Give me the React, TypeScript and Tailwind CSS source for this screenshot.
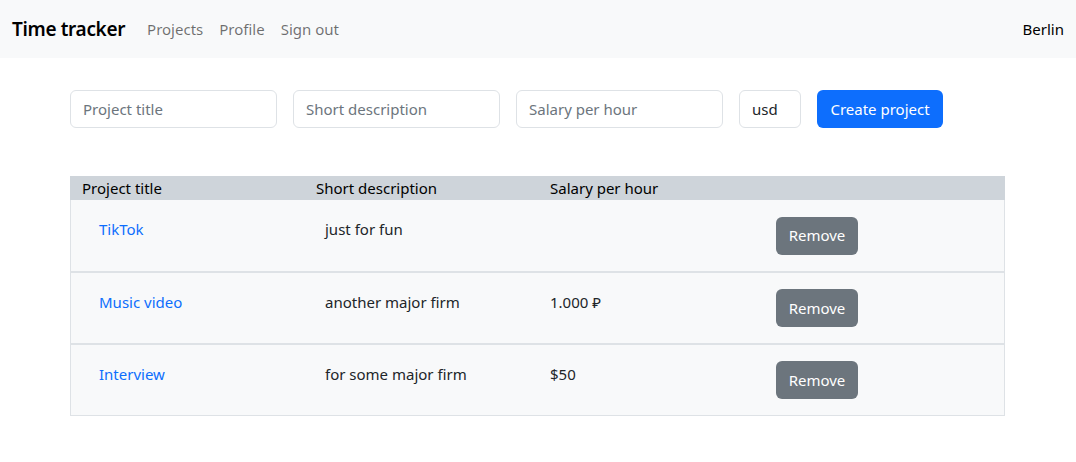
import React from "react";

const projects = [
  { title: "TikTok", desc: "just for fun", salary: "" },
  { title: "Music video", desc: "another major firm", salary: "1.000 ₽" },
  { title: "Interview", desc: "for some major firm", salary: "$50" },
];

export default function App() {
  return (
    <div
      className="min-h-[462px] bg-white text-[#212529]"
      style={{ fontFamily: '"Noto Sans", "Open Sans", sans-serif' }}
    >
      <nav className="h-[58px] bg-[#f8f9fa] flex items-center px-3">
        <span className="text-[19px] font-semibold text-black mr-[22px] tracking-[-0.35px]">Time tracker</span>
        <div className="flex gap-[16px] text-[15px] text-[#00000090]">
          <a>Projects</a>
          <a>Profile</a>
          <a>Sign out</a>
        </div>
        <span className="ml-auto text-[15px] text-black">Berlin</span>
      </nav>

      <div className="pl-[70px] pr-[71px]">
        <form className="flex gap-4 mt-[32px]">
          <input
            placeholder="Project title"
            className="w-[207px] h-[38px] border border-[#dee2e6] rounded-[6px] px-3 text-[15px] placeholder:text-[#6c757d] outline-none"
          />
          <input
            placeholder="Short description"
            className="w-[207px] h-[38px] border border-[#dee2e6] rounded-[6px] px-3 text-[15px] placeholder:text-[#6c757d] outline-none"
          />
          <input
            placeholder="Salary per hour"
            className="w-[207px] h-[38px] border border-[#dee2e6] rounded-[6px] px-3 text-[15px] placeholder:text-[#6c757d] outline-none"
          />
          <div className="w-[62px] h-[38px] border border-[#dee2e6] rounded-[6px] px-3 flex items-center text-[15px]">
            usd
          </div>
          <button className="w-[126px] h-[38px] bg-[#0d6efd] text-white rounded-[6px] text-[15px]">
            Create project
          </button>
        </form>

        <div className="mt-[48px] w-[935px]">
          <div className="grid grid-cols-[234px_234px_234px_1fr] h-[24px] items-center bg-[#ced4da] px-3 text-[15px] text-black">
            <span>Project title</span>
            <span>Short description</span>
            <span>Salary per hour</span>
            <span />
          </div>
          <div className="border border-t-0 border-[#dee2e6]">
            {projects.map((p, i) => (
              <div
                key={p.title}
                className={`grid grid-cols-[254px_225px_226px_1fr] bg-[#f8f9fa] text-[15px] ${
                  i > 0 ? "h-[72px] border-t-2 border-[#dee2e6]" : "h-[71px]"
                }`}
              >
                <a className="pl-[28px] pt-[18px] text-[#0d6efd]">{p.title}</a>
                <span className="pt-[18px]">{p.desc}</span>
                <span className="pt-[18px]">{p.salary}</span>
                <div className="flex items-center">
                  <button className="w-[82px] h-[38px] bg-[#6c757d] text-white rounded-[6px] text-[15px]">
                    Remove
                  </button>
                </div>
              </div>
            ))}
          </div>
        </div>
      </div>
    </div>
  );
}
